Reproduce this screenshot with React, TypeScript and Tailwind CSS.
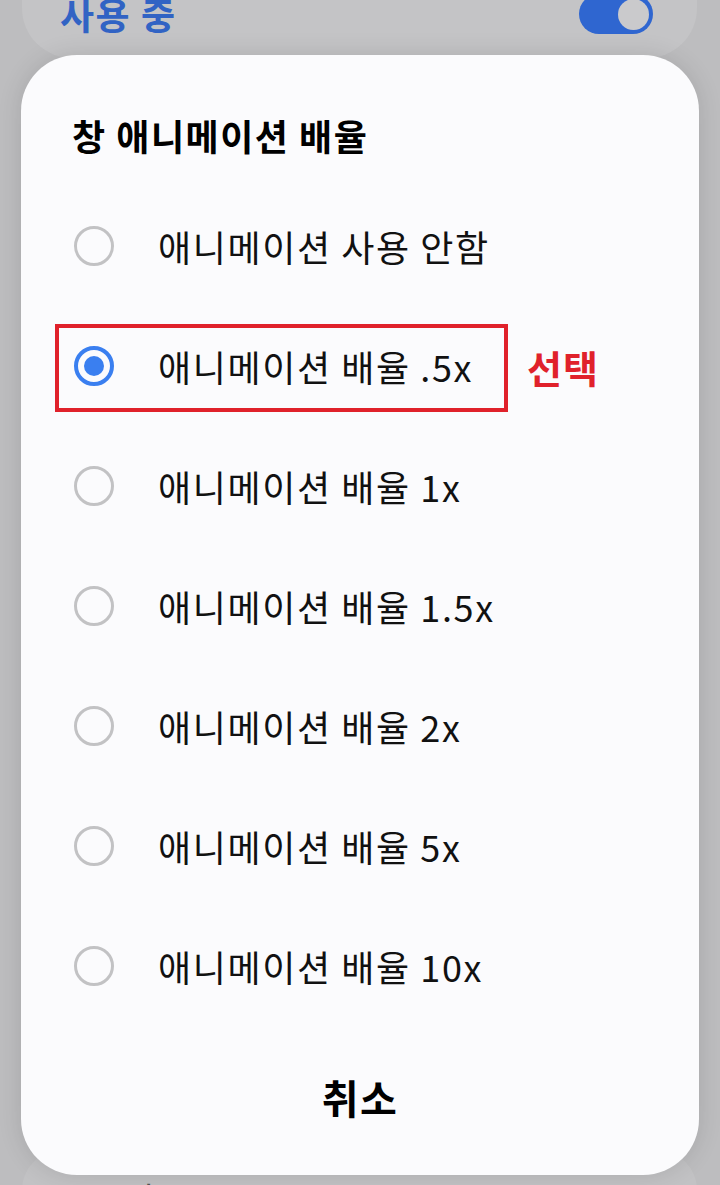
import { useState } from "react"

const options = [
  "애니메이션 사용 안함",
  "애니메이션 배율 .5x",
  "애니메이션 배율 1x",
  "애니메이션 배율 1.5x",
  "애니메이션 배율 2x",
  "애니메이션 배율 5x",
  "애니메이션 배율 10x",
]

const font = { fontFamily: '"Noto Sans CJK KR", "Noto Sans", sans-serif' }

function Radio({ checked }: { checked: boolean }) {
  if (checked) {
    return (
      <span className="flex h-[40px] w-[40px] shrink-0 items-center justify-center rounded-full border-[4px] border-[#3a7ff0]">
        <span className="h-[20px] w-[20px] rounded-full bg-[#3a7ff0]" />
      </span>
    )
  }
  return <span className="h-[40px] w-[40px] shrink-0 rounded-full border-[3px] border-[#c2c2c4]" />
}

export default function App() {
  const [selected, setSelected] = useState(1)

  return (
    <div className="relative h-[1185px] w-[720px] overflow-hidden bg-[#bdbdbf]" style={font}>
      {/* settings page dimmed underneath */}
      <div className="absolute left-[22px] right-[23px] top-[-70px] h-[128px] rounded-[50px] bg-[#c4c4c6]">
        <div className="flex h-full items-end justify-between pb-[22px] pl-[38px] pr-[44px]">
          <span className="text-[37px] font-bold leading-[44px] tracking-[1.5px] text-[#3163c4]">사용 중</span>
          <span className="mb-[2px] flex h-[40px] w-[74px] items-center justify-end rounded-full bg-[#2f66d0] pr-[4px]">
            <span className="h-[31px] w-[31px] rounded-full bg-[#cacacc]" />
          </span>
        </div>
      </div>
      <div className="absolute left-[22px] right-[23px] top-[1150px] h-[120px] rounded-[40px] bg-[#c2c2c4] pl-[38px] pt-[24px]">
        <span className="text-[30px] leading-[40px] text-[#555557]">000 mb</span>
      </div>

      {/* dialog */}
      <div className="relative mx-[21px] mt-[55px] flex h-[1120px] flex-col rounded-[56px] bg-[#fbfbfd] shadow-[0_0_24px_rgba(0,0,0,0.12)]">
        <h2 className="pl-[51px] pt-[58px] text-[36px] font-bold leading-[44px] tracking-[1.5px] text-black">
          창 애니메이션 배율
        </h2>

        <div className="mt-[29px] flex flex-col">
          {options.map((label, i) => (
            <button
              key={label}
              onClick={() => setSelected(i)}
              className="relative flex h-[120px] items-center gap-[44px] pl-[53px] text-left"
            >
              <Radio checked={selected === i} />
              <span className="text-[36px] leading-[44px] tracking-[1.6px] text-[#111]">{label}</span>
              {i === 1 && (
                <>
                  <span className="pointer-events-none absolute left-[34px] top-[18px] h-[88px] w-[453px] border-[4px] border-[#e0212b]" />
                  <span className="absolute left-[506px] top-[39px] text-[38px] font-bold leading-[44px] tracking-[1px] text-[#e0212b]">
                    선택
                  </span>
                </>
              )}
            </button>
          ))}
        </div>

        <button className="flex h-[142px] items-center justify-center text-[40px] font-bold tracking-[1.5px] text-black">
          취소
        </button>
      </div>
    </div>
  )
}
